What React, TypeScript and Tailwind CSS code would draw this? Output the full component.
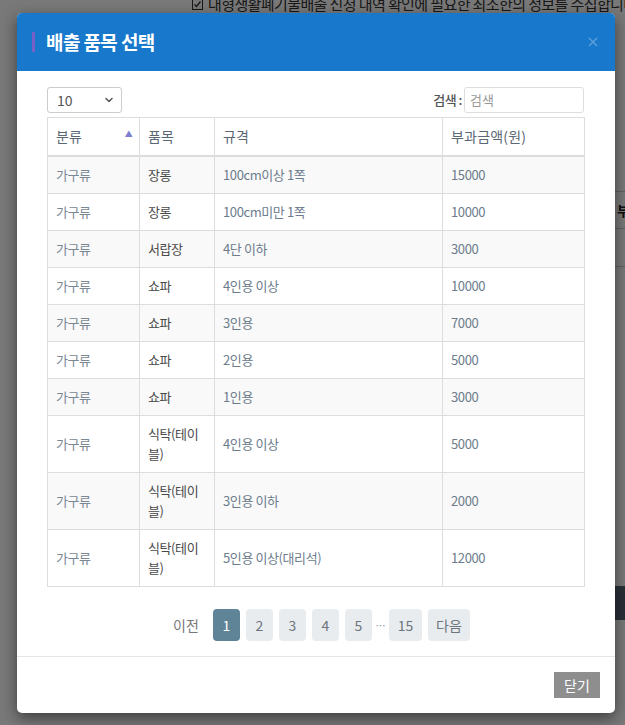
import { ChevronDown } from "lucide-react";

type Row = { cat: string; item: string; spec: string; price: string };

const rows: Row[] = [
  { cat: "가구류", item: "장롱", spec: "100cm이상 1쪽", price: "15000" },
  { cat: "가구류", item: "장롱", spec: "100cm미만 1쪽", price: "10000" },
  { cat: "가구류", item: "서랍장", spec: "4단 이하", price: "3000" },
  { cat: "가구류", item: "쇼파", spec: "4인용 이상", price: "10000" },
  { cat: "가구류", item: "쇼파", spec: "3인용", price: "7000" },
  { cat: "가구류", item: "쇼파", spec: "2인용", price: "5000" },
  { cat: "가구류", item: "쇼파", spec: "1인용", price: "3000" },
  { cat: "가구류", item: "식탁(테이블)", spec: "4인용 이상", price: "5000" },
  { cat: "가구류", item: "식탁(테이블)", spec: "3인용 이하", price: "2000" },
  { cat: "가구류", item: "식탁(테이블)", spec: "5인용 이상(대리석)", price: "12000" },
];

const pages = ["1", "2", "3", "4", "5"];

export default function App() {
  return (
    <div className="relative h-[725px] w-[625px] overflow-hidden bg-white font-['Noto_Sans_CJK_KR','Noto_Sans',sans-serif]">
      {/* page behind the modal */}
      <div className="-mt-[6px] flex h-[20px] items-center gap-[5px] whitespace-nowrap pl-[192px] text-[15px] tracking-[-0.6px] text-[#333]">
        <svg width="11" height="11" viewBox="0 0 11 11" className="shrink-0">
          <rect x="0.5" y="0.5" width="10" height="10" fill="none" stroke="#333" />
          <path d="M2.5 5.5 L4.5 7.5 L8.5 2.5" fill="none" stroke="#333" strokeWidth="1.3" />
        </svg>
        <span>대형생활폐기물배출 신청 내역 확인에 필요한 최소한의 정보를 수집합니다</span>
      </div>
      <div className="ml-[440px] mt-[177px] border-t border-[#ccc]">
        <div className="flex h-[37px] items-center whitespace-nowrap border-b border-[#ccc] pl-[177px] text-[14px] font-bold text-[#222]">
          부과금액
        </div>
        <div className="h-[38px] border-b border-[#ccc]" />
      </div>
      <div className="ml-[300px] mt-[319px] h-[34px] bg-[#5a6578]" />

      {/* modal backdrop */}
      <div className="absolute inset-0 bg-black/[0.525]">
        <div className="ml-[17px] mt-[13px] w-[598px] overflow-hidden rounded-[5px] bg-white shadow-[0_5px_15px_rgba(0,0,0,0.5)]">
          {/* header */}
          <div className="flex h-[58px] items-center justify-between bg-[#1878cc] pl-[15px] pr-[17px]">
            <div className="flex items-center gap-[11px]">
              <span className="h-[20px] w-[3px] bg-[#7b5fc9]" />
              <h2 className="text-[19px] font-bold tracking-[-0.6px] text-white">배출 품목 선택</h2>
            </div>
            <svg width="10" height="10" viewBox="0 0 10 10" className="opacity-30">
              <path d="M1 1 L9 9 M9 1 L1 9" stroke="#fff" strokeWidth="1.3" />
            </svg>
          </div>

          {/* body */}
          <div className="pl-[30px] pr-[31px] pt-[16px] pb-[15px]">
            <div className="flex h-[26px] items-start justify-between">
              <div className="flex h-[26px] w-[75px] items-center justify-between rounded-[3px] border border-[#ccc] pl-[9px] pr-[6px] text-[14px] text-[#555]">
                <span>10</span>
                <ChevronDown className="h-[12px] w-[12px] text-[#555]" strokeWidth={3} />
              </div>
              <div className="flex items-center gap-[2px]">
                <span className="text-[13px] font-medium tracking-[-0.5px] text-[#555]">검색 :</span>
                <div className="flex h-[26px] w-[120px] items-center rounded-[3px] border border-[#ddd] pl-[5px] text-[13px] text-[#999]">
                  검색
                </div>
              </div>
            </div>

            <table className="mt-[4px] w-[537px] table-fixed border-collapse text-left">
              <colgroup>
                <col className="w-[92px]" />
                <col className="w-[75px]" />
                <col className="w-[228px]" />
                <col className="w-[142px]" />
              </colgroup>
              <thead>
                <tr className="text-[14px] leading-[21px] tracking-[0.2px] text-[#5a6875]">
                  <th className="border border-b-2 border-[#ddd] px-[8px] py-[8px] font-normal">
                    <div className="flex items-center justify-between">
                      <span>분류</span>
                      <span className="-mr-[2px] -mt-[6px] text-[8px] text-[#7c7fcf]">▲</span>
                    </div>
                  </th>
                  <th className="border border-b-2 border-[#ddd] px-[8px] py-[8px] font-normal">품목</th>
                  <th className="border border-b-2 border-[#ddd] px-[8px] py-[8px] font-normal">규격</th>
                  <th className="border border-b-2 border-[#ddd] px-[8px] py-[8px] font-normal">부과금액(원)</th>
                </tr>
              </thead>
              <tbody className="text-[13px] leading-[20px] tracking-[-0.4px]">
                {rows.map((r, i) => (
                  <tr key={i} className={i % 2 === 0 ? "bg-[#f9f9f9]" : "bg-white"}>
                    <td className="border border-[#ddd] px-[8px] py-[8px] align-middle text-[#7a8894]">{r.cat}</td>
                    <td className="border border-[#ddd] px-[8px] py-[8px] align-middle text-[#4a4a4a]">{r.item}</td>
                    <td className="border border-[#ddd] px-[8px] py-[8px] align-middle text-[#6c7c8c]">{r.spec}</td>
                    <td className="border border-[#ddd] px-[8px] py-[8px] align-middle text-[#6c7c8c]">{r.price}</td>
                  </tr>
                ))}
              </tbody>
            </table>

            {/* pagination */}
            <div className="mt-[22px] flex h-[32px] items-center justify-center gap-[6px] pl-[4px] text-[14px]">
              <span className="flex h-[32px] w-[42px] items-center justify-center text-[#777]">이전</span>
              {pages.map((p) => (
                <span
                  key={p}
                  className={`flex h-[32px] w-[27px] items-center justify-center rounded-[4px] ${
                    p === "1" ? "bg-[#5f8497] text-white" : "bg-[#e9ecef] text-[#6c757d]"
                  }`}
                >
                  {p}
                </span>
              ))}
              <span className="-mx-[3px] w-[11px] text-center text-[10px] text-[#888]">…</span>
              <span className="flex h-[32px] w-[33px] items-center justify-center rounded-[4px] bg-[#e9ecef] text-[#6c757d]">15</span>
              <span className="flex h-[32px] w-[42px] items-center justify-center rounded-[4px] bg-[#e9ecef] text-[#6c757d]">다음</span>
            </div>
          </div>

          {/* footer */}
          <div className="flex h-[57px] items-center justify-end border-t border-[#e5e5e5] pr-[15px]">
            <button className="h-[26px] w-[46px] bg-[#8e8e8e] text-[14px] text-white">닫기</button>
          </div>
        </div>
      </div>
    </div>
  );
}
